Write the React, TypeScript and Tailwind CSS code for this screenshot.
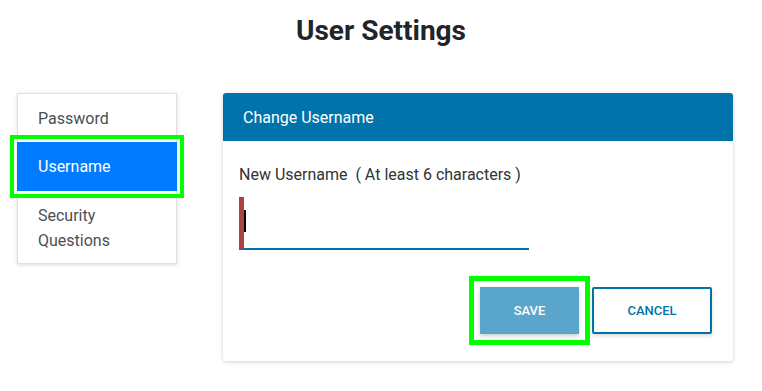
export default function App() {
  return (
    <div className="min-h-[391px] w-[762px] bg-white font-['Roboto',sans-serif]">
      <h1 className="pt-[15px] text-center text-[28px] font-bold leading-[32px] text-[#212529]">
        User Settings
      </h1>

      <div className="mt-[46px] flex items-start pl-[17px]">
        {/* Side menu */}
        <div className="w-[160px] border border-[#e0e0e0] bg-white shadow-[0_1px_4px_rgba(0,0,0,0.14)]">
          <div className="px-5 pb-[11px] pt-3 text-base leading-[25px] text-[#4a4f55]">Password</div>
          <div className="-mx-px bg-[#007bff] px-[21px] py-3 text-base leading-[25px] text-white outline-4 outline-offset-[3px] outline-[#00ff00]">
            Username
          </div>
          <div className="px-5 pb-[10px] pt-3 text-base leading-[25px] text-[#4a4f55]">
            Security
            <br />
            Questions
          </div>
        </div>

        {/* Form card */}
        <div className="ml-[46px] w-[510px] overflow-hidden rounded-[3px] bg-white shadow-[0_1px_4px_rgba(0,0,0,0.18)]">
          <div className="flex h-12 items-center bg-[#0173ab] px-5 pt-px text-base text-white">
            Change Username
          </div>
          <div className="px-4 pb-[27px] pt-[22px]">
            <label className="block text-base leading-6 text-[#333]">
              New Username&nbsp; ( At least 6 characters )
            </label>
            <div className="mt-[10px] flex h-[53px] w-[290px] items-center border-b-2 border-l-[5px] border-b-[#0173ab] border-l-[#a94442]">
              <span className="mb-[3px] h-[22px] w-[2px] bg-black" />
            </div>
            <div className="mt-[37px] flex justify-end gap-[13px] pr-[5px]">
              <button className="h-[47px] w-[99px] bg-[#5aa5cc] text-[13px] font-medium text-white shadow-[0_2px_4px_rgba(0,0,0,0.2)] outline-[5px] outline-offset-[6px] outline-[#00ff00]">
                SAVE
              </button>
              <button className="h-[47px] w-[120px] rounded-[2px] border-2 border-[#0173ab] bg-white text-[13px] font-medium text-[#0173ab] shadow-[0_2px_4px_rgba(0,0,0,0.15)]">
                CANCEL
              </button>
            </div>
          </div>
        </div>
      </div>
    </div>
  );
}
